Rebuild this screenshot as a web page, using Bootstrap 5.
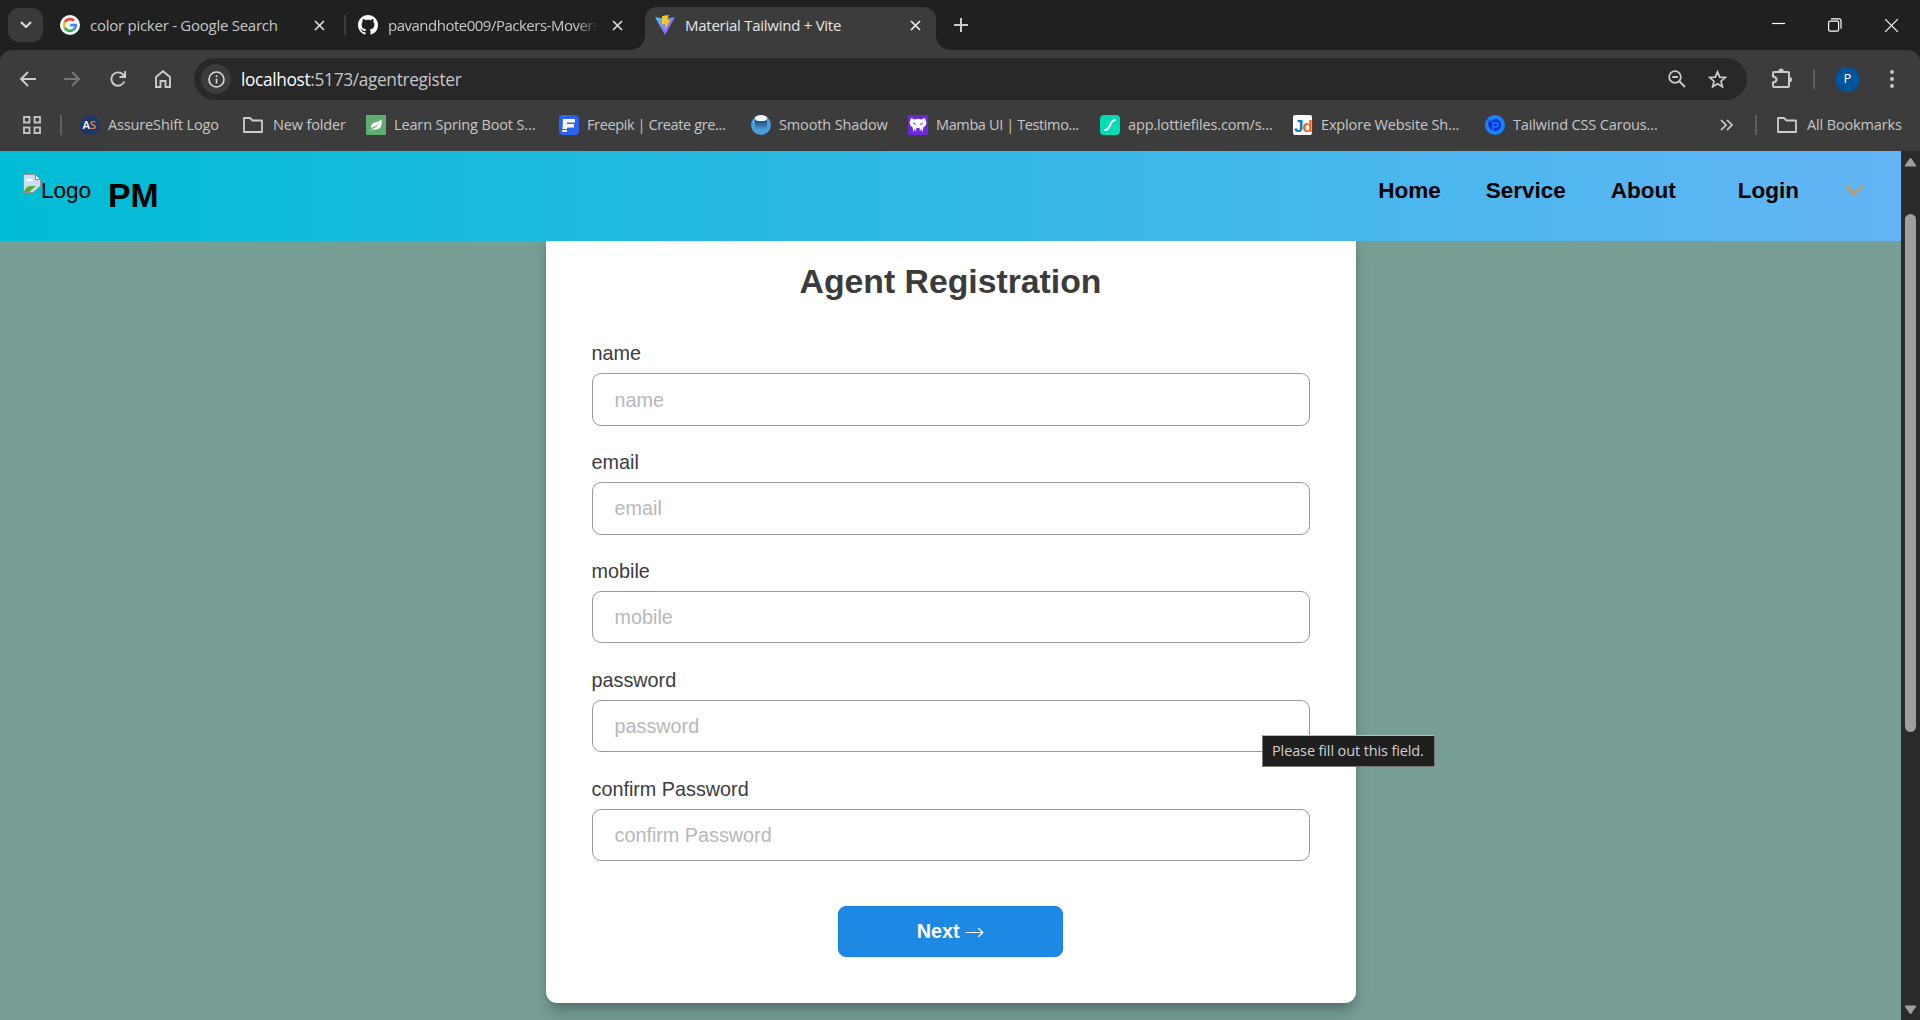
<!DOCTYPE html>
<html lang="en">
<head>
<meta charset="utf-8">
<title>Material Tailwind + Vite</title>
<link href="https://cdn.jsdelivr.net/npm/bootstrap@5.3.0/dist/css/bootstrap.min.css" rel="stylesheet">
<style>
html,body{height:1020px;overflow:hidden}
body{width:1920px;font-family:"Open Sans","Noto Sans",sans-serif;background:#1f201f;color:#c7c7c7}
svg{display:block;flex:none}
.tabstrip{height:50px;background:#1f2020;font-size:15px;letter-spacing:-.26px;padding-left:8px}
.tabsearch{width:35px;height:34px;border-radius:11px;background:#3a3a3a;margin-right:10px}
.browsertab{height:34px;padding-left:7px;padding-right:11px;white-space:nowrap}
.tablabel{flex:1 1 0;min-width:0;margin-left:10px;overflow:hidden;line-height:22px}
.fadeout{-webkit-mask-image:linear-gradient(90deg,#000 90%,transparent);letter-spacing:-.5px}
.activetab{height:43px;background:#3c3c3c;color:#e6e6e6;border-radius:12px 12px 0 0;align-self:flex-end;position:relative;padding:0 15px 7px 10px;width:291px}
.activetab::before,.activetab::after{content:"";position:absolute;bottom:0;width:14px;height:14px}
.activetab::before{left:-14px;background:radial-gradient(circle at 0 0,transparent 13.5px,#3c3c3c 14px)}
.activetab::after{right:-14px;background:radial-gradient(circle at 100% 0,transparent 13.5px,#3c3c3c 14px)}
.tabdivider{width:2px;height:20px;background:#3e3e3e}
.toolbar-area{height:101px;background:#3c3c3c;border-radius:12px 12px 0 0}
.addressline{height:58px;padding-left:19px}
.omnibox{width:1553px;height:42px;border-radius:21px;background:#282828;margin-left:23px;padding:0 20px 0 7px;font-size:17.3px;letter-spacing:-.34px}
.urltext{padding-top:1px}
.infochip{width:30px;height:30px;border-radius:50%;background:#3c3c3c}
.avatar-dot{width:25px;height:25px;border-radius:50%;background:#00549c;color:#fff;font-size:13px}
.vline{width:2px;height:20px;background:#5f5f5f}
.bookmarks{height:34px;font-size:14.5px;letter-spacing:-.14px;white-space:nowrap}
.bkgrid{display:grid;grid-template-columns:163px 123px 193px 192px 157px 192px 193px 192px 235px;margin-left:18px}
.bkitem{display:flex;align-items:center;gap:8px}
.bktight{letter-spacing:-.38px}
.pagearea{height:869px;font-family:"Liberation Sans",Arial,sans-serif}
.content-pane{width:1901px;background:#779f96;overflow:hidden}
.sitenav{height:90px;background:linear-gradient(90deg,#00bcd4,#64b5f6);color:#000;padding:0 38px 0 23px;position:relative;z-index:2;font-size:22.5px;line-height:34px}
.brandname{font-size:33.75px;line-height:40px;margin-left:17px}
.formcard{width:810px;height:772px;margin:-10px auto 0;background:#fff;border-radius:11px;padding:28px 46px 0;box-shadow:0 11px 17px -3px rgba(0,0,0,.25),0 4px 7px -2px rgba(0,0,0,.12);color:#3c3c3c;font-size:19.8px}
.formcard h1{font-size:33.75px;line-height:44px;margin:0 0 35.4px;color:#3b3b3b}
.field-group{height:108.8px}
.field-group label{display:block;line-height:30px;height:35px}
.field-group .form-control{height:52.4px;border:1px solid #999;border-radius:9px;padding:1px 22px 0;font-size:19.8px;background:#fff}
.form-control::placeholder{color:#b8b8b8}
.nextbtn{width:225px;height:51px;background:#1e88e5;border:1px solid #1480e2;border-radius:8px;color:#fff;font-size:19.8px;line-height:1;margin-top:23.6px;white-space:nowrap}
.nextarrow{font:200 24px/0 "DejaVu Sans",sans-serif;margin-left:-1px;position:relative;top:2px}
.sbar{width:19px;background:#2b2b2b;padding:6px 0 5px}
.thumb{width:11px;height:518px;border-radius:6px;background:#9f9f9f;margin-top:47px}
.hint{position:absolute;left:1262px;top:735px;width:173px;height:32px;background:#1f1f1f;border:1px solid #777;border-top-color:#bbb;color:#d0d0d0;font:14.5px/30px "Open Sans",sans-serif;letter-spacing:-.12px;padding-left:9px;white-space:nowrap;z-index:5}
</style>
</head>
<body>
<header>
<div class="tabstrip d-flex align-items-center pt-0">
  <div class="tabsearch d-flex align-items-center justify-content-center"><svg width="12" height="8" viewBox="0 0 12 8" fill="none" stroke="#ddd" stroke-width="2"><path d="M1 1l5 5 5-5"/></svg></div>
  <div class="browsertab d-flex align-items-center" style="width:283px">
    <svg width="20" height="20" viewBox="0 0 20 20"><circle cx="10" cy="10" r="10" fill="#fff"/><g fill="none" stroke-width="2.7"><path d="M14.1 5.7A5.9 5.9 0 0 0 4.8 7.2" stroke="#ea4335"/><path d="M4.8 7.2a5.9 5.9 0 0 0 0 5.6" stroke="#fbbc05"/><path d="M4.8 12.8a5.9 5.9 0 0 0 8.9 1.7" stroke="#34a853"/><path d="M13.7 14.5A5.9 5.9 0 0 0 15.8 10.2H10.2" stroke="#4285f4"/></g></svg>
    <span class="tablabel">color picker - Google Search</span>
    <svg width="11" height="11" viewBox="0 0 11 11" stroke="#ddd" stroke-width="1.7"><path d="M1 1l9 9M10 1l-9 9"/></svg>
  </div>
  <div class="tabdivider ms-2"></div>
  <div class="browsertab d-flex align-items-center ps-0" style="width:284px;margin-left:8px">
    <svg class="ms-1" width="20" height="20" viewBox="0 0 16 16" fill="#fff"><path d="M8 0C3.58 0 0 3.58 0 8c0 3.54 2.29 6.53 5.47 7.59.4.07.55-.17.55-.38 0-.19-.01-.82-.01-1.49-2.01.37-2.53-.49-2.69-.94-.09-.23-.48-.94-.82-1.13-.28-.15-.68-.52-.01-.53.63-.01 1.08.58 1.23.82.72 1.21 1.87.87 2.33.66.07-.52.28-.87.51-1.07-1.78-.2-3.64-.89-3.64-3.95 0-.87.31-1.59.82-2.15-.08-.2-.36-1.02.08-2.12 0 0 .67-.21 2.2.82.64-.18 1.32-.27 2-.27s1.36.09 2 .27c1.53-1.04 2.2-.82 2.2-.82.44 1.1.16 1.92.08 2.12.51.56.82 1.27.82 2.15 0 3.07-1.87 3.75-3.65 3.95.29.25.54.73.54 1.48 0 1.07-.01 1.93-.01 2.2 0 .21.15.46.55.38A8.01 8.01 0 0 0 16 8c0-4.42-3.58-8-8-8z"/></svg>
    <span class="tablabel fadeout" style="margin-right:14px">pavandhote009/Packers-Movers</span>
    <svg class="me-1" width="11" height="11" viewBox="0 0 11 11" stroke="#ddd" stroke-width="1.7"><path d="M1 1l9 9M10 1l-9 9"/></svg>
  </div>
  <div class="activetab d-flex align-items-center" style="margin-left:7px">
    <svg width="20" height="20" viewBox="0 0 20 20"><defs><linearGradient id="va" x2="1" y2="1"><stop stop-color="#41d1ff"/><stop offset="1" stop-color="#bd34fe"/></linearGradient></defs><path d="M0 2l10 2 10-2-10 18z" fill="url(#va)"/><path d="M7 1l7-1-2 5h3l-5 10 .5-6-3.500.5z" fill="#ffc61c"/></svg>
    <span class="tablabel">Material Tailwind + Vite</span>
    <svg width="11" height="11" viewBox="0 0 11 11" stroke="#eee" stroke-width="1.7"><path d="M1 1l9 9M10 1l-9 9"/></svg>
  </div>
  <svg style="margin-left:18px" width="14" height="14" viewBox="0 0 14 14" stroke="#ccc" stroke-width="2"><path d="M7 0v14M0 7h14"/></svg>
  <div class="d-flex align-items-center ms-auto" style="gap:43px;padding-right:22px">
    <svg width="13" height="14" viewBox="0 0 13 14" stroke="#fff" stroke-width="1.200"><path d="M0 5.500h13"/></svg>
    <svg width="14" height="14" viewBox="0 0 14 14" fill="none" stroke="#fff" stroke-width="1.200"><rect x=".6" y="3.200" width="10" height="10" rx="1.500"/><path d="M3 .8h8q2 0 2 2v8"/></svg>
    <svg width="13" height="13" viewBox="0 0 13 13" stroke="#fff" stroke-width="1.200"><path d="M0 0l13 13M13 0L0 13"/></svg>
  </div>
</div>
<div class="toolbar-area">
  <div class="addressline d-flex align-items-center">
    <svg width="17" height="16" viewBox="0 0 17 16" fill="none" stroke="#ccc" stroke-width="1.900"><path d="M17 8H2M9 1L2 8l7 7"/></svg>
    <svg style="margin-left:28px" width="17" height="16" viewBox="0 0 17 16" fill="none" stroke="#777" stroke-width="1.900"><path d="M0 8h15M8 1l7 7-7 7"/></svg>
    <svg style="margin-left:29px" width="16" height="16" viewBox="0 0 16 16" fill="none" stroke="#ccc" stroke-width="1.900"><path d="M14.300 10.500A6.700 6.700 0 1 1 13 3.500L14.500 5M15.100 0v6H9.500"/></svg>
    <svg style="margin-left:29px" width="16" height="18" viewBox="0 0 16 18" fill="none" stroke="#ccc" stroke-width="1.900"><path d="M1 7l7-5.800L15 7v10h-4.500v-6h-5v6H1z"/></svg>
    <div class="omnibox d-flex align-items-center">
      <div class="infochip d-flex align-items-center justify-content-center"><svg width="17" height="17" viewBox="0 0 17 17" fill="none" stroke="#ddd" stroke-width="1.600"><circle cx="8.500" cy="8.500" r="7.500"/><path d="M8.500 7.500v5M8.500 4.300v1.800"/></svg></div>
      <span class="urltext" style="margin-left:10px"><span class="text-white">localhost</span>:5173/agentregister</span>
      <svg class="ms-auto" width="18" height="18" viewBox="0 0 18 18" fill="none" stroke="#ccc" stroke-width="1.800"><circle cx="7" cy="7" r="5.800"/><path d="M11.500 11.500L17 17M4.300 7h5.400"/></svg>
      <svg style="margin-left:22px" width="19" height="18" viewBox="0 0 19 18" fill="none" stroke="#ccc" stroke-width="1.700"><path d="M9.500 1.800l2.200 5.300 5.700.4-4.400 3.700 1.400 5.600-4.900-3-4.900 3L6 11.200 1.600 7.500l5.700-.4z"/></svg>
    </div>
    <svg style="margin-left:24px;margin-top:-4px" width="21" height="21" viewBox="0 0 21 21"><path d="M4 5H17Q18 5 18 6V19Q18 20 17 20H3Q2 20 2 19V15.500Q5.500 15 5.500 12.500T2 9.500V6Q2 5 3 5z" fill="none" stroke="#ccc" stroke-width="2"/><path d="M7.500 4a2.600 2.600 0 0 1 5.200 0zM18.500 10a2.600 2.600 0 0 1 0 5.200z" fill="#ccc"/></svg>
    <div class="vline" style="margin-left:21px"></div>
    <div class="avatar-dot d-flex align-items-center justify-content-center" style="margin-left:20px">P</div>
    <svg style="margin-left:30px" width="4" height="18" viewBox="0 0 4 18" fill="#ccc"><circle cx="2" cy="2" r="1.900"/><circle cx="2" cy="9" r="1.900"/><circle cx="2" cy="16" r="1.900"/></svg>
  </div>
  <div class="bookmarks d-flex align-items-center">
    <svg style="margin-left:23px" width="18" height="18" viewBox="0 0 18 18" fill="none" stroke="#c0c0c0" stroke-width="1.900"><path d="M1 1h5.500v5.500H1zM11.500 1H17v5.500h-5.500zM1 11.500h5.500V17H1zM11.500 11.500H17V17h-5.500z"/></svg>
    <div class="vline" style="margin-left:19px"></div>
    <div class="bkgrid">
      <div class="bkitem"><svg width="20" height="20" viewBox="0 0 20 20"><circle cx="10" cy="10" r="10" fill="#213569"/><text x="2.500" y="14" font-size="11.500" font-weight="600" letter-spacing="-.3" fill="#fff">A<tspan fill="#e8893a">S</tspan></text></svg><span>AssureShift Logo</span></div>
      <div class="bkitem" style="gap:10px"><svg width="20" height="16" viewBox="0 0 20 16" fill="none" stroke="#ccc" stroke-width="1.800"><path d="M1 1h6l2.500 2.500H19V15H1z" stroke-linejoin="round"/></svg><span>New folder</span></div>
      <div class="bkitem"><svg width="20" height="20" viewBox="0 0 20 20"><path fill="#5fae70" d="M0 0h20v20H0z"/><path d="M15.500 4.500q1.500 9-5.500 10-3 .3-4-.5 5-1.500 7-5.500-3 3.500-8 4.500Q4.500 8.500 9 7.500q4.500-1 6.500-3zM4.500 14l1.500 1-1.500.5z" fill="#fff"/></svg><span>Learn Spring Boot S...</span></div>
      <div class="bkitem"><svg width="20" height="20" viewBox="0 0 20 20"><rect width="20" height="20" rx="4" fill="#2b62f0"/><path d="M4 4h12v3.500H8V9h7v3.500H8V14H3.500zM3 15h5v1.800H3z" fill="#fff"/></svg><span class="bktight">Freepik | Create gre...</span></div>
      <div class="bkitem"><svg width="20" height="20" viewBox="0 0 20 20"><defs><linearGradient id="sh" x2="0" y2="1"><stop offset=".2" stop-color="#174f83"/><stop offset=".8" stop-color="#4d9fdc"/></linearGradient></defs><circle cx="10" cy="10" r="10" fill="#4d9fdc"/><path d="M4 3h12v9a6 6 0 0 1-12 0z" fill="url(#sh)"/><path d="M4 2q6-4 12 0v2q-1 2-3 2H7Q5 6 4 4z" fill="#fff"/></svg><span>Smooth Shadow</span></div>
      <div class="bkitem"><svg width="20" height="20" viewBox="0 0 20 20"><rect width="20" height="20" rx="1" fill="#6d28d9"/><path d="M3 3l4 1.500Q10 3 13 4.500L17 3l1.500 5q-.5 3-3 4l-1 5-1.500-3.500-1 3.500-.5-4h-3l-.5 4-1-3.500L5.500 17l-1-5q-2.500-1-3-4z" fill="#fff"/><path d="M5 8l3 1.500M15 8l-3 1.500" stroke="#6d28d9"/></svg><span class="bktight">Mamba UI | Testimo...</span></div>
      <div class="bkitem"><svg width="20" height="20" viewBox="0 0 20 20"><rect width="20" height="20" rx="4" fill="#00ddb3"/><path d="M5 15c6 0 4-9 10-10" stroke="#fff" stroke-width="2" fill="none" stroke-linecap="round"/></svg><span>app.lottiefiles.com/s...</span></div>
      <div class="bkitem"><svg width="20" height="20" viewBox="0 0 20 20"><rect width="19" height="20" rx="2" fill="#fff"/><text x="1" y="16.500" font-family="Liberation Sans,sans-serif" font-size="17" font-weight="700" letter-spacing="-1" fill="#1274c0">J<tspan fill="#f26522">d</tspan></text></svg><span>Explore Website Sh...</span></div>
      <div class="bkitem"><svg width="20" height="20" viewBox="0 0 20 20"><circle cx="10" cy="10" r="10" fill="#1683ff"/><path d="M5 4q-3 4-1 8 2 4 6 4 6-1 6-6t-5-6q-4 0-5 4z" fill="#0b32d6"/><path d="M8 15V8q5-1 5 1.500T9 12" fill="none" stroke="#1683ff" stroke-width="1.500"/></svg><span>Tailwind CSS Carous...</span></div>
    </div>
    <svg width="13" height="12" viewBox="0 0 13 12" fill="none" stroke="#ccc" stroke-width="1.700"><path d="M1 1l5 5-5 5M7 1l5 5-5 5"/></svg>
    <div class="vline" style="margin-left:22px"></div>
    <div class="bkitem" style="margin-left:20px;gap:10px"><svg width="20" height="16" viewBox="0 0 20 16" fill="none" stroke="#ccc" stroke-width="1.800"><path d="M1 1h6l2.500 2.500H19V15H1z" stroke-linejoin="round"/></svg><span>All Bookmarks</span></div>
  </div>
</div>
</header>
<main class="pagearea d-flex">
  <div class="content-pane">
    <nav class="sitenav d-flex">
      <div class="d-flex" style="padding-top:23px"><svg width="18" height="19" viewBox="0 0 18 19"><path d="M.5.500h12l5 5V12L10 18.500H.5z" fill="#cfdcf5" stroke="#9a8f8f"/><path d="M12.500.5v5h5z" fill="#fff" stroke="#888"/><path d="M3 7q1-3 4-2 3 0 3 2z" fill="#fff"/><path d="M1 18q2-7 8-6h4l-7 6z" fill="#53ab2c"/></svg><span class="logoalt">Logo</span></div>
      <strong class="brandname" style="padding-top:24px">PM</strong>
      <div class="d-flex fw-bold ms-auto" style="padding-top:23px"><span>Home</span><span style="margin-left:45px">Service</span><span style="margin-left:45px">About</span><span style="margin-left:62px">Login</span>
      <svg style="margin:11px 0 0 46px" width="18" height="12" viewBox="0 0 18 12" fill="none" stroke="#b39c74" stroke-width="3.300" stroke-linecap="round"><path d="M2 2l7 7 7-7"/></svg></div>
    </nav>
    <form class="formcard">
      <h1 class="text-center fw-bold">Agent Registration</h1>
      <div class="field-group"><label for="f1">name</label><input id="f1" class="form-control" placeholder="name"></div>
      <div class="field-group"><label for="f2">email</label><input id="f2" class="form-control" placeholder="email"></div>
      <div class="field-group"><label for="f3">mobile</label><input id="f3" class="form-control" placeholder="mobile"></div>
      <div class="field-group"><label for="f4">password</label><input id="f4" class="form-control" placeholder="password"></div>
      <div class="field-group"><label for="f5">confirm Password</label><input id="f5" class="form-control" placeholder="confirm Password"></div>
      <button type="button" class="btn nextbtn d-block mx-auto fw-bold">Next <span class="nextarrow">→</span></button>
    </form>
  </div>
  <div class="sbar d-flex flex-column align-items-center">
    <svg width="13" height="10" viewBox="0 0 13 10"><path d="M6.500 1L12 9H1z" fill="#9f9f9f" stroke="#9f9f9f" stroke-linejoin="round"/></svg>
    <div class="thumb"></div>
    <svg class="mt-auto" width="13" height="10" viewBox="0 0 13 10"><path d="M6.500 9L12 1H1z" fill="#9f9f9f" stroke="#9f9f9f" stroke-linejoin="round"/></svg>
  </div>
</main>
<div class="hint" role="tooltip">Please fill out this field.</div>
<script src="https://cdn.jsdelivr.net/npm/bootstrap@5.3.0/dist/js/bootstrap.bundle.min.js"></script>
</body>
</html>
